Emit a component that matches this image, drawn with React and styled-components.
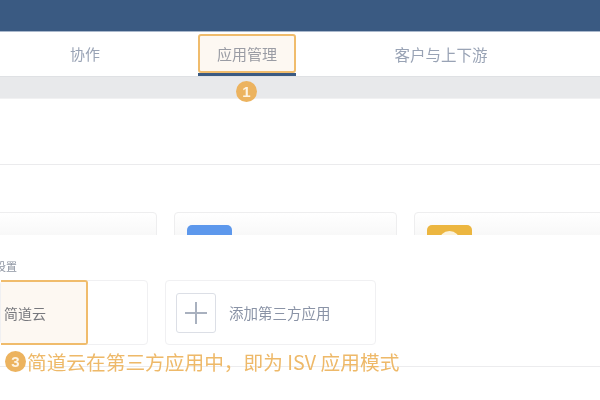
import React from "react";
import styled, { createGlobalStyle } from "styled-components";

const Global = createGlobalStyle`
  html, body { margin: 0; padding: 0; background: #fff; }
  #root { width: 600px; height: 400px; overflow: hidden; }
`;
const Page = styled.div`
  width: 600px; height: 400px; overflow: hidden; display: flex; flex-direction: column;
  font-family: "Noto Sans CJK SC", "Liberation Sans", sans-serif; background: #fff; filter: blur(0.55px);
`;
const Header = styled.div`height: 31px; flex: none; background: #3a5a82; border-bottom: 1px solid #a9b8cc;`;
const Tabs = styled.div`height: 44px; flex: none; display: flex; background: #fff; border-bottom: 1px solid #dfe1e4;`;
const TabSlot = styled.div`
  width: ${p => p.$w}px; padding-right: ${p => p.$pr || 0}px; box-sizing: border-box; display: flex;
  align-items: center; justify-content: center; padding-bottom: 1px; font-size: ${p => p.$fs || 15}px; color: #99a3b5;
`;
const ActiveWrap = styled.div`position: relative; width: 98px; height: 44px; box-sizing: border-box; padding-top: 2px; border-bottom: 3px solid #3a5a82;`;
const ActiveTab = styled.div`
  height: 39px; box-sizing: border-box; border: 2px solid #f0bc6c; border-radius: 3px; background: #fdf8f2;
  display: flex; align-items: center; justify-content: center; font-size: 15px; color: #9a9ca4; padding-bottom: 1px;
`;
const Badge = styled.span`
  display: flex; align-items: center; justify-content: center; width: 21px; height: 21px; flex: none; border-radius: 50%;
  background: #ecb35f; color: #fdf3e2; font: 700 15px "Liberation Sans", sans-serif;
`;
const TabBadge = styled(Badge)`position: absolute; left: 38px; top: 49px;`;
const Strip = styled.div`height: 21px; flex: none; background: #e8e9eb; border-bottom: 1px solid #f1f1f2;`;
const Hero = styled.div`height: 65px; flex: none; border-bottom: 1px solid #ebebed;`;
const CardRow = styled.div`height: 23px; flex: none; display: flex; gap: 17px; margin-left: -66px; margin-top: 47px;`;
const AppCard = styled.div`
  width: ${p => p.$w}px; height: 60px; flex: none; box-sizing: border-box; border: 1px solid #eeeeef; border-radius: 4px;
  padding: 12px 12px; background: linear-gradient(#fff, #f8f8f8 23px);
`;
const AppIcon = styled.div`width: 45px; height: 45px; border-radius: 5px; background: ${p => p.$c}; position: relative; overflow: hidden;`;
const IconDot = styled.div`position: absolute; left: 12px; top: 6px; width: 21px; height: 21px; border-radius: 50%; background: #fbf2dc;`;
const Panel = styled.div`
  position: relative; flex: 1; background: #fff; display: flex; flex-direction: column;
`;
const SectionLabel = styled.div`height: 46px; flex: none; box-sizing: border-box; padding-top: 21px; margin-left: -5px; margin-bottom: -1px; font-size: 11px; line-height: 20px; color: #8f96a3;`;
const OptionRow = styled.div`display: flex; gap: 17px; height: 65px; flex: none;`;
const OptionCard = styled.div`
  width: 148px; height: 65px; flex: none; box-sizing: border-box; border: 1px solid #f0f0f2; border-radius: 4px;
  background: #fff; display: flex;
`;
const Selected = styled.div`
  width: 87px; height: 65px; margin-top: -1px; box-sizing: border-box; border: 2px solid #f0bc6c; border-left: none; border-radius: 0 3px 3px 0;
  background: #fdf8f2; display: flex; align-items: center; padding-left: 3px; font-size: 14px; color: #77787d; flex: none;
`;
const AddCard = styled.div`
  width: 211px; height: 65px; flex: none; box-sizing: border-box; border: 1px solid #f0f0f2; border-radius: 4px;
  display: flex; align-items: center; gap: 13px; padding-left: 10px; font-size: 14.5px; color: #8a93a6;
`;
const PlusBox = styled.div`
  width: 40px; height: 40px; box-sizing: border-box; border: 1px solid #dcdfe6; border-radius: 3px; display: flex; align-items: center; justify-content: center;
`;
const Callout = styled.div`
  position: relative; height: 21px; flex: none; margin-top: 6px; padding-left: 5px; display: flex; align-items: center; gap: 1px;
  font-size: 19.7px; line-height: 21px; color: #eeb969; white-space: nowrap; z-index: 1;
`;
const Rule = styled.div`height: 1px; flex: none; margin-top: -6px; background: #ececee;`;

export default function App() {
  return (
    <Page>
      <Global />
      <Header />
      <Tabs>
        <TabSlot $w={198} $pr={28}>协作</TabSlot>
        <ActiveWrap>
          <ActiveTab>应用管理</ActiveTab>
          <TabBadge>1</TabBadge>
        </ActiveWrap>
        <TabSlot $w={290} $fs={15.5}>客户与上下游</TabSlot>
      </Tabs>
      <Strip />
      <Hero />
      <CardRow>
        <AppCard $w={223} />
        <AppCard $w={223}><AppIcon $c="#5d98ec" /></AppCard>
        <AppCard $w={223}><AppIcon $c="#ecb640"><IconDot /></AppIcon></AppCard>
      </CardRow>
      <Panel>
        <SectionLabel>设置</SectionLabel>
        <OptionRow>
          <OptionCard><Selected>简道云</Selected></OptionCard>
          <AddCard>
            <PlusBox>
              <svg width="24" height="24" viewBox="0 0 24 24" fill="none" stroke="#a9b1bf" strokeWidth="2"><path d="M12 1v22M1 12h22" /></svg>
            </PlusBox>
            添加第三方应用
          </AddCard>
        </OptionRow>
        <Callout><Badge>3</Badge>简道云在第三方应用中，即为 ISV 应用模式</Callout>
        <Rule />
      </Panel>
    </Page>
  );
}
